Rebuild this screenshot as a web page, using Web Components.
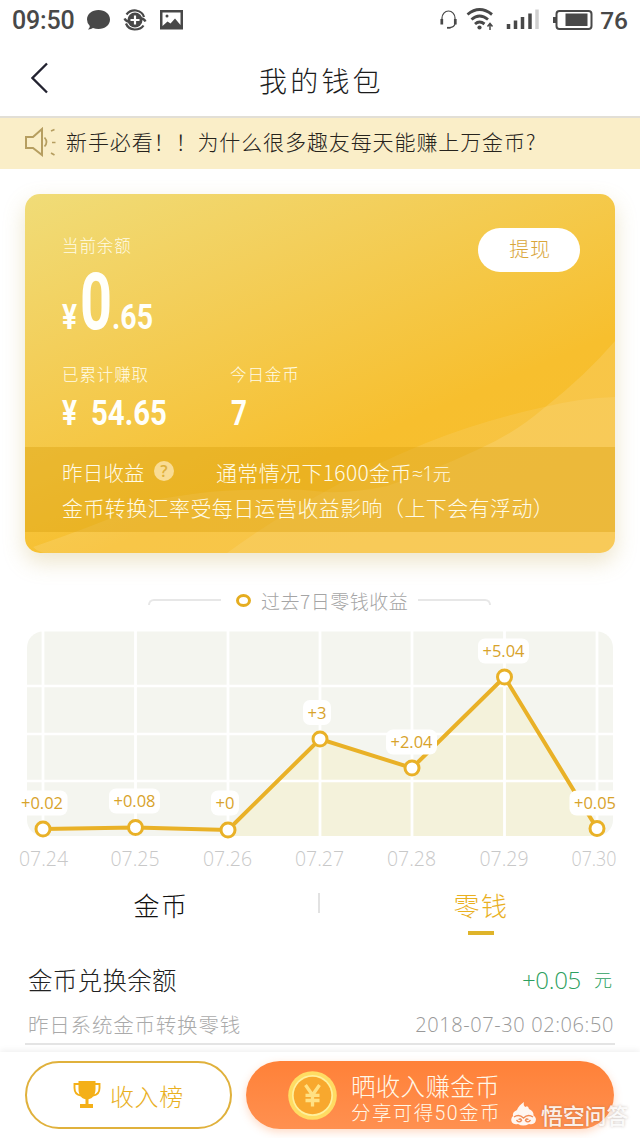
<!DOCTYPE html>
<html lang="zh-CN">
<head>
<meta charset="utf-8">
<title>我的钱包</title>
<style>
    body {
        margin: 0;
        width: 640px;
        height: 1138px;
        overflow: hidden;
        position: relative;
        background: #fff;
        color: #222;
        font-family: 'Noto Sans CJK SC', sans-serif;
        font-weight: 300;
        --gold: #e9b01f;
    }
</style>
</head>
<body>
<wallet-page></wallet-page>

<script>
// Barra de estado
class StatusBar extends HTMLElement {
    constructor() {
        super();
        this.attachShadow({ mode: 'open' });
    }
    connectedCallback() {
        this.shadowRoot.innerHTML = `
            <style>
                :host { display: flex; justify-content: space-between; align-items: center; height: 40px; box-sizing: border-box; padding: 0 12px 0 12px; color: #484848; font: 500 24.5px/40px Roboto, sans-serif; }
                svg { display: block; }
                .side { display: flex; align-items: center; }
                .side span { padding-top: 1px; }
                .clock { width: 74px; font-size: 25px; letter-spacing: -.2px; }
            </style>
            <div class="side">
                <span class="clock">09:50</span>
                <svg width="100" height="40" viewBox="86 0 100 40">
                    <path d="M98.500 10C105 10 110 14 110 19.500S105 29 98.500 29Q95.500 29 93 28Q91 29.500 88 29.400Q90 28 89.800 26Q87 23.500 87 19.500C87 14 92 10 98.500 10Z" fill="#484848"/>
                    <circle cx="135" cy="20" r="7.500" fill="#484848"/>
                    <path d="M126.500 14.500Q130 10 136 10.500Q143 12 144 17M126 23.500Q128 29 134.500 29.500Q141 29.500 143.500 25.500" fill="none" stroke="#484848" stroke-width="2.200"/>
                    <path d="M124.500 18.500Q127 23 131 21M145.500 21.500Q143 17 139 19" fill="none" stroke="#484848" stroke-width="2.400"/>
                    <path d="M135 15.500v9M130.500 20h9" stroke="#fff" stroke-width="2.200"/>
                    <path d="M160 10h23v19.500h-23z" fill="#484848"/>
                    <path d="M162.500 12.500h18v12.500l-5.500-6.500-4.500 5-3-2-5 4.500z" fill="#fff"/>
                    <circle cx="167" cy="16" r="1.500" fill="#484848"/>
                </svg>
            </div>
            <div class="side">
                <svg width="161" height="40" viewBox="439 0 161 40" fill="none" stroke="#484848">
                    <path d="M442 20v-2a6.500 7 0 0 1 13 0v2M455 24q-1 3-5 3.700" stroke-width="1.200"/>
                    <path d="M441.800 19v5.500M455.300 19v5.500" stroke-width="2.700"/>
                    <path d="M447 27.800h3.500" stroke-width="1.800"/>
                    <path d="M467.500 14.500Q479.500 4.500 492 14.500M471.500 19.500Q479.500 12.500 488 19.500M475 24Q479.500 20 484.500 24" stroke-width="2.900"/>
                    <circle cx="479.500" cy="27.500" r="2.100" fill="#484848" stroke="none"/>
                    <path d="M490 30v-6M487.500 26.500l2.500-3 2.500 3" stroke-width="1.500"/>
                    <path d="M508.500 29v-5M515.500 29v-8.500M522.500 29v-12M530 29v-15.500" stroke-width="3.500"/>
                    <path d="M537 29v-19.500" stroke="#d0d0d0" stroke-width="3.500"/>
                    <rect x="556.500" y="11" width="35" height="18" rx="3" stroke-width="2"/>
                    <path d="M565.500 13.500h22v12.500h-22zM553 17h3v6h-3z" fill="#484848" stroke="none"/>
                </svg>
                <span>76</span>
            </div>
        `;
    }
}
customElements.define('status-bar', StatusBar);

// Cabecera con botón de volver
class NavHeader extends HTMLElement {
    constructor() {
        super();
        this.attachShadow({ mode: 'open' });
    }
    connectedCallback() {
        this.shadowRoot.innerHTML = `
            <style>
                :host { display: grid; grid-template-columns: 228px 1fr; align-items: center; height: 78px; box-sizing: border-box; padding: 0 31px 0 31px; border-bottom: 2px solid #e2dfd6; color: #1c1c1c; font-size: 28px; line-height: 76px; letter-spacing: 3.2px; }
                h1 { margin: 2px 0 0; font: inherit; }
                svg { margin-top: -2px; }
            </style>
            <svg width="18" height="32" viewBox="0 0 18 32"><path d="M16 1.500L1.500 16L16 30.500" fill="none" stroke="#222230" stroke-width="2.300"/></svg>
            <h1><slot></slot></h1>
        `;
    }
}
customElements.define('nav-header', NavHeader);

class NoticeBar extends HTMLElement {
    constructor() {
        super();
        this.attachShadow({ mode: 'open' });
    }
    connectedCallback() {
        this.shadowRoot.innerHTML = `
            <style>
                :host { display: flex; align-items: center; gap: 10px; height: 51px; box-sizing: border-box; padding: 0 24px 3px; background: #faeec8; color: #26231c; font-size: 21px; letter-spacing: .9px; white-space: nowrap; }
                span { margin-top: -2px; }
            </style>
            <svg width="32" height="30" viewBox="24 127 32 30" fill="none" stroke="#b69e60" stroke-width="2">
                <path d="M26 137h7l9-8v26l-9-7h-7z"/>
                <path d="M44.500 137.500q4 4.500 0 9M51 131l3.500-1.500M52 142.500h3.500M51 153l3.500 2" stroke-width="1.700"/>
            </svg>
            <span><slot></slot></span>
        `;
    }
}
customElements.define('notice-bar', NoticeBar);

// Cifras estrechas de la tarjeta
class MoneyFigure extends HTMLElement {
    constructor() {
        super();
        this.attachShadow({ mode: 'open' });
    }
    connectedCallback() {
        const h = this.getAttribute('height') || 26;
        const parts = JSON.parse(this.getAttribute('parts'));
        this.shadowRoot.innerHTML = `
            <style>
                :host { display: block; height: ${h}px; }
                svg { display: block; overflow: visible; font-family: Roboto, sans-serif; font-weight: 700; fill: #fffffa; }
            </style>
            <svg width="110" height="${h}">
                <text y="${h - 1}">${parts.map(p => `<tspan x="${p[1]}" font-size="${p[3]}" textLength="${p[2]}" lengthAdjust="spacingAndGlyphs">${p[0]}</tspan>`).join('')}</text>
            </svg>
        `;
    }
}
customElements.define('money-figure', MoneyFigure);

// Tarjeta de saldo
class BalanceCard extends HTMLElement {
    constructor() {
        super();
        this.attachShadow({ mode: 'open' });
    }
    connectedCallback() {
        this.shadowRoot.innerHTML = `
            <style>
                :host { display: block; height: 359px; margin: 25px 25px 0; border-radius: 15px; position: relative; background: linear-gradient(157deg, #f0dc78 0%, #f3cf5b 27%, #f7bf2e 64%, #f8bd30 100%); box-shadow: 0 9px 22px rgba(190, 160, 70, .28); color: #fffbe6; }
                .waves { position: absolute; left: 0; top: 0; border-radius: 15px; }
                .content { position: relative; display: flex; flex-direction: column; height: 359px; }
                .top { display: flex; justify-content: space-between; height: 136px; padding: 34px 35px 0 37px; }
                .label { font-size: 16.5px; line-height: 24px; letter-spacing: .9px; margin: 5px 0 0; white-space: nowrap; }
                button { width: 102px; height: 44px; padding: 0 0 3px 2px; border: 0; border-radius: 22px; background: #fff; color: #d9a63a; font: inherit; font-size: 20px; letter-spacing: .7px; }
                .totals { display: grid; grid-template-columns: 168px 1fr; height: 83px; padding: 5px 37px 0; box-sizing: border-box; margin-top: -7px; }
                .totals .label { margin: 0 0 14px; }
                .rate { height: 85px; margin-top: 7px; padding: 8px 0 0 37px; box-sizing: border-box; background: rgba(218, 159, 15, .4); font-size: 21px; line-height: 35px; letter-spacing: .4px; white-space: nowrap; }
                .rate div { display: flex; align-items: center; height: 35px; }
                .rate .first { width: 92px; font-size: 20.5px; letter-spacing: .2px; }
                .help { width: 20px; height: 20px; margin: -3px 42px 0 0; border-radius: 50%; background: #f9dc94; color: #deb03c; font: 600 16px/20px 'Open Sans', sans-serif; letter-spacing: 0; text-align: center; }
                .tip { letter-spacing: .35px; }
                .tip i { font: 300 20px 'Open Sans', sans-serif; letter-spacing: -1px; }
            </style>
            <svg class="waves" width="590" height="359">
                <path d="M590 147Q560 182 519 214Q490 239 454 255Q405 278 362 292Q330 299 300 298Q260 293 225 296Q190 295 129 306Q75 330 8 353Q14 359 22 359H590Z" fill="#fff" opacity=".12"/>
                <path d="M590 203Q555 204 519 213Q455 227 401 249Q345 272 301 297Q245 327 202 359H590Z" fill="#fff" opacity=".09"/>
            </svg>
            <div class="content">
                <div class="top">
                    <div>
                        <p class="label">当前余额</p>
                        <money-figure height="58" parts='[["¥",0,15,35],["0",18,32,80],[".65",50,41,35]]' style="margin-top:15px"></money-figure>
                    </div>
                    <button>提现</button>
                </div>
                <div class="totals">
                    <div>
                        <p class="label">已累计赚取</p>
                        <money-figure parts='[["¥",0,15,35],["54.65",29,76,35]]'></money-figure>
                    </div>
                    <div>
                        <p class="label">今日金币</p>
                        <money-figure parts='[["7",1,16,35]]'></money-figure>
                    </div>
                </div>
                <div class="rate">
                    <div><span class="first">昨日收益</span><span class="help">?</span><span class="tip">通常情况下1600金币<i>≈1</i><span style="font-size:18px">元</span></span></div>
                    <div>金币转换汇率受每日运营收益影响（上下会有浮动）</div>
                </div>
            </div>
        `;
    }
}
customElements.define('balance-card', BalanceCard);

// Gráfico de los últimos siete días
class IncomeChart extends HTMLElement {
    constructor() {
        super();
        this.attachShadow({ mode: 'open' });
        this.days = [
            { date: '07.24', value: '+0.02', x: 43, y: 199, lx: 42, ly: 173, w: 51 },
            { date: '07.25', value: '+0.08', x: 135.500, y: 197.500, lx: 134.500, ly: 171, w: 51 },
            { date: '07.26', value: '+0', x: 228, y: 200, lx: 225, ly: 173, w: 28 },
            { date: '07.27', value: '+3', x: 320, y: 109, lx: 317, ly: 82.500, w: 28 },
            { date: '07.28', value: '+2.04', x: 412, y: 138, lx: 411.500, ly: 112, w: 51 },
            { date: '07.29', value: '+5.04', x: 504.500, y: 47, lx: 503.500, ly: 21, w: 51 },
            { date: '07.30', value: '+0.05', x: 597, y: 198.500, lx: 595, ly: 173, w: 51 }
        ];
    }
    connectedCallback() {
        const line = this.days.map(d => `${d.x},${d.y}`).join(' ');
        this.shadowRoot.innerHTML = `
            <style>
                :host { display: block; height: 245px; }
                svg { display: block; font-family: 'Open Sans', sans-serif; font-weight: 300; }
                .value { fill: #d8a32b; font-size: 17px; font-weight: 400; }
                .date { fill: #c8c8c8; font-size: 20px; }
            </style>
            <svg width="640" height="245" viewBox="0 0 640 245" text-anchor="middle">
                <rect x="27" y="1.500" width="586" height="204.500" rx="16" fill="#f4f5ef"/>
                <polygon points="228,206 228,200 320,109 412,138 504.500,47 597,198.500 597,206" fill="#f6edbd" opacity=".4"/>
                <path d="M27 56h586M27 104h586M27 151h586" stroke="#fff" stroke-width="2.300"/>
                <path d="${this.days.map(d => `M${d.x} 1v205`).join('')}" stroke="#fff" stroke-width="2.800"/>
                <polyline points="${line}" fill="none" stroke="#e9b127" stroke-width="4"/>
                ${this.days.map(d => `
                    <rect x="${d.lx - d.w / 2}" y="${d.ly - 12.500}" width="${d.w}" height="25" rx="7" fill="#fff"/>
                    <text class="value" x="${d.lx}" y="${d.ly + 6}" textLength="${d.value.length > 2 ? 42 : 19}" lengthAdjust="spacingAndGlyphs">${d.value}</text>
                    <circle cx="${d.x}" cy="${d.y}" r="7" fill="#fff" stroke="#e9b127" stroke-width="3"/>
                    <text class="date" x="${d.x > 590 ? 594 : d.x + (d.x < 50 ? .500 : -.500)}" y="236" textLength="${d.x > 590 ? 45 : 49}" lengthAdjust="spacingAndGlyphs">${d.date}</text>
                `).join('')}
            </svg>
        `;
    }
}
customElements.define('income-chart', IncomeChart);

class SectionTitle extends HTMLElement {
    constructor() {
        super();
        this.attachShadow({ mode: 'open' });
    }
    connectedCallback() {
        this.shadowRoot.innerHTML = `
            <style>
                :host { display: flex; align-items: center; height: 77px; box-sizing: border-box; padding: 18px 0 0 148px; color: #a5a5a5; font-size: 19px; letter-spacing: .5px; white-space: nowrap; }
                i { width: 73px; height: 6px; box-sizing: border-box; border-top: 2px solid #e7e7e7; border-left: 2px solid #e7e7e7; border-radius: 6px 0 0 0; margin-top: 3px; }
                i.right { border-left: 0; border-right: 2px solid #e7e7e7; border-radius: 0 6px 0 0; }
                b { width: 15px; height: 13px; box-sizing: border-box; border: 3.5px solid #e5ad20; border-radius: 50%; margin: -1px 10px 0 15px; }
                span { width: 157px; }
            </style>
            <i></i><b></b><span><slot></slot></span><i class="right"></i>
        `;
    }
}
customElements.define('section-title', SectionTitle);

class WalletTabs extends HTMLElement {
    constructor() {
        super();
        this.attachShadow({ mode: 'open' });
    }
    connectedCallback() {
        this.shadowRoot.innerHTML = `
            <style>
                :host { display: grid; grid-template-columns: 318px 2px 320px; align-items: start; height: 76px; padding-top: 11px; box-sizing: border-box; font-size: 26px; line-height: 38px; letter-spacing: 1.5px; text-align: center; color: #111; }
                .sep { height: 20px; margin-top: 7px; background: #e2e2e2; }
                .tab { padding-left: 4px; }
                .active { padding-left: 2px; color: var(--gold); }
                .active::after { content: ''; display: block; width: 26px; height: 4px; margin: 7px auto 0; background: #dfb42a; }
            </style>
            <div class="tab">金币</div><div class="sep"></div><div class="tab active">零钱</div>
        `;
    }
}
customElements.define('wallet-tabs', WalletTabs);

class RecordItem extends HTMLElement {
    constructor() {
        super();
        this.attachShadow({ mode: 'open' });
    }
    connectedCallback() {
        this.shadowRoot.innerHTML = `
            <style>
                :host { display: block; margin: 0 25px; height: 94px; box-sizing: border-box; border-bottom: 2px solid #e4e4e4; }
                .row { display: flex; justify-content: space-between; align-items: center; padding: 0 1px 0 3px; white-space: nowrap; }
                .main { height: 56px; font-size: 24.5px; letter-spacing: .3px; }
                .sub { height: 34px; color: #aaa; font-size: 20.5px; letter-spacing: .8px; }
                .amount { display: flex; gap: 13px; align-items: center; color: #2d9f60; font: 300 24px 'Open Sans', 'Noto Sans CJK SC', sans-serif; letter-spacing: -.3px; padding-right: 2px; }
                .amount em { font: 300 18px 'Noto Sans CJK SC', sans-serif; letter-spacing: 0; }
                .time { font: 300 20px 'Open Sans', sans-serif; letter-spacing: .6px; color: #999; }
            </style>
            <div class="row main"><span><slot></slot></span><span class="amount">+0.05 <em>元</em></span></div>
            <div class="row sub"><span><slot name="note"></slot></span><span class="time"><slot name="time"></slot></span></div>
        `;
    }
}
customElements.define('record-item', RecordItem);

// Barra inferior con los dos botones
class ActionBar extends HTMLElement {
    constructor() {
        super();
        this.attachShadow({ mode: 'open' });
    }
    connectedCallback() {
        this.shadowRoot.innerHTML = `
            <style>
                :host { display: flex; gap: 14px; height: 86px; margin-top: 7px; padding: 9px 25px 0; box-sizing: border-box; background: #fff; box-shadow: 0 -2px 6px rgba(0, 0, 0, .06); white-space: nowrap; }
                .rank { display: flex; align-items: center; gap: 9px; width: 207px; height: 68px; box-sizing: border-box; padding: 0 0 0 46px; border: 2px solid #e0b13c; border-radius: 34px; color: var(--gold); font-size: 24px; letter-spacing: .6px; }
                .share { display: flex; align-items: center; gap: 14px; width: 368px; height: 68px; box-sizing: border-box; padding-left: 42px; border-radius: 34px; background: linear-gradient(#ff8138, #ff9050); box-shadow: 0 3px 8px rgba(255, 135, 65, .3); color: #fff8e8; font-family: Roboto, 'Noto Sans CJK SC', sans-serif; }
                .words { padding-top: 8px; }
                .big { font-size: 24.5px; line-height: 29px; letter-spacing: .3px; }
                .small { font-size: 19.5px; line-height: 24px; letter-spacing: 1.4px; }
            </style>
            <div class="rank">
                <svg width="28" height="28" viewBox="0 0 28 28" fill="#f4b018">
                    <path d="M5.500 0h17v8c0 6-3 9.500-7 10.300V23h4.500v4H7v-4h5.500v-4.700C8.500 17.500 5.500 14 5.500 8z"/>
                    <path d="M6 3H1.500v4c0 4 2.500 7 6.500 7.500M22 3h4.500v4c0 4-2.500 7-6.500 7.500" fill="none" stroke="#f4b018" stroke-width="1.900"/>
                </svg>
                <span>收入榜</span>
            </div>
            <div class="share">
                <svg width="49" height="49" viewBox="0 0 49 49">
                    <circle cx="24.500" cy="24.500" r="24.300" fill="#ffdc63"/>
                    <circle cx="24.500" cy="24.500" r="20.500" fill="#fff09c"/>
                    <circle cx="24.500" cy="24.500" r="18.800" fill="#f8a82e"/>
                    <path d="M17.500 14l7 10 7-10M24.500 23v12.500M17.500 24.300h14M17.500 29.500h14" fill="none" stroke="#ffe184" stroke-width="3.300"/>
                </svg>
                <div class="words">
                    <div class="big">晒收入赚金币</div>
                    <div class="small">分享可得50金币</div>
                </div>
            </div>
        `;
    }
}
customElements.define('action-bar', ActionBar);

// Marca de agua sobre la barra inferior
class SiteMark extends HTMLElement {
    constructor() {
        super();
        this.attachShadow({ mode: 'open' });
    }
    connectedCallback() {
        this.shadowRoot.innerHTML = `
            <style>
                :host { position: absolute; left: 510px; top: 1098px; display: flex; align-items: center; gap: 4px; color: rgba(255, 255, 255, .9); font-size: 22px; font-weight: 500; line-height: 32px; letter-spacing: -.2px; text-shadow: 0 0 3px rgba(120, 100, 90, .4); white-space: nowrap; }
            </style>
            <svg width="27" height="27" viewBox="0 0 27 27">
                <path d="M14 1Q9 4 7 9Q2 11 3 15Q0 18 2 21.500Q4 24 8 23Q13 26 19 23Q24 24 25.500 20.500Q27 17 23.500 14.500Q24 10 19 8Q18 4 15.500 6Q13 5 14 1Z" fill="#fff" opacity=".92"/>
                <path d="M4 16Q9 12.500 13.500 17Q18 12.500 23 16M6.500 19Q9 22.500 11.500 19.500Q11 17 8.500 18.500M20.500 19Q18 22.500 15.500 19.500Q16 17 18.500 18.500" fill="none" stroke="#f18b54" stroke-width="1.400"/>
            </svg>
            <span>悟空问答</span>
        `;
    }
}
customElements.define('site-mark', SiteMark);

class WalletPage extends HTMLElement {
    constructor() {
        super();
        this.attachShadow({ mode: 'open' });
    }
    connectedCallback() {
        this.shadowRoot.innerHTML = `
            <style>
                :host { display: flex; flex-direction: column; height: 1138px; }
            </style>
            <status-bar></status-bar>
            <nav-header>我的钱包</nav-header>
            <notice-bar>新手必看！！为什么很多趣友每天能赚上万金币?</notice-bar>
            <balance-card></balance-card>
            <section-title>过去7日零钱收益</section-title>
            <income-chart></income-chart>
            <wallet-tabs></wallet-tabs>
            <record-item>金币兑换余额<span slot="note">昨日系统金币转换零钱</span><span slot="time">2018-07-30 02:06:50</span></record-item>
            <action-bar></action-bar>
            <site-mark></site-mark>
        `;
    }
}
customElements.define('wallet-page', WalletPage);
</script>
</body>
</html>
